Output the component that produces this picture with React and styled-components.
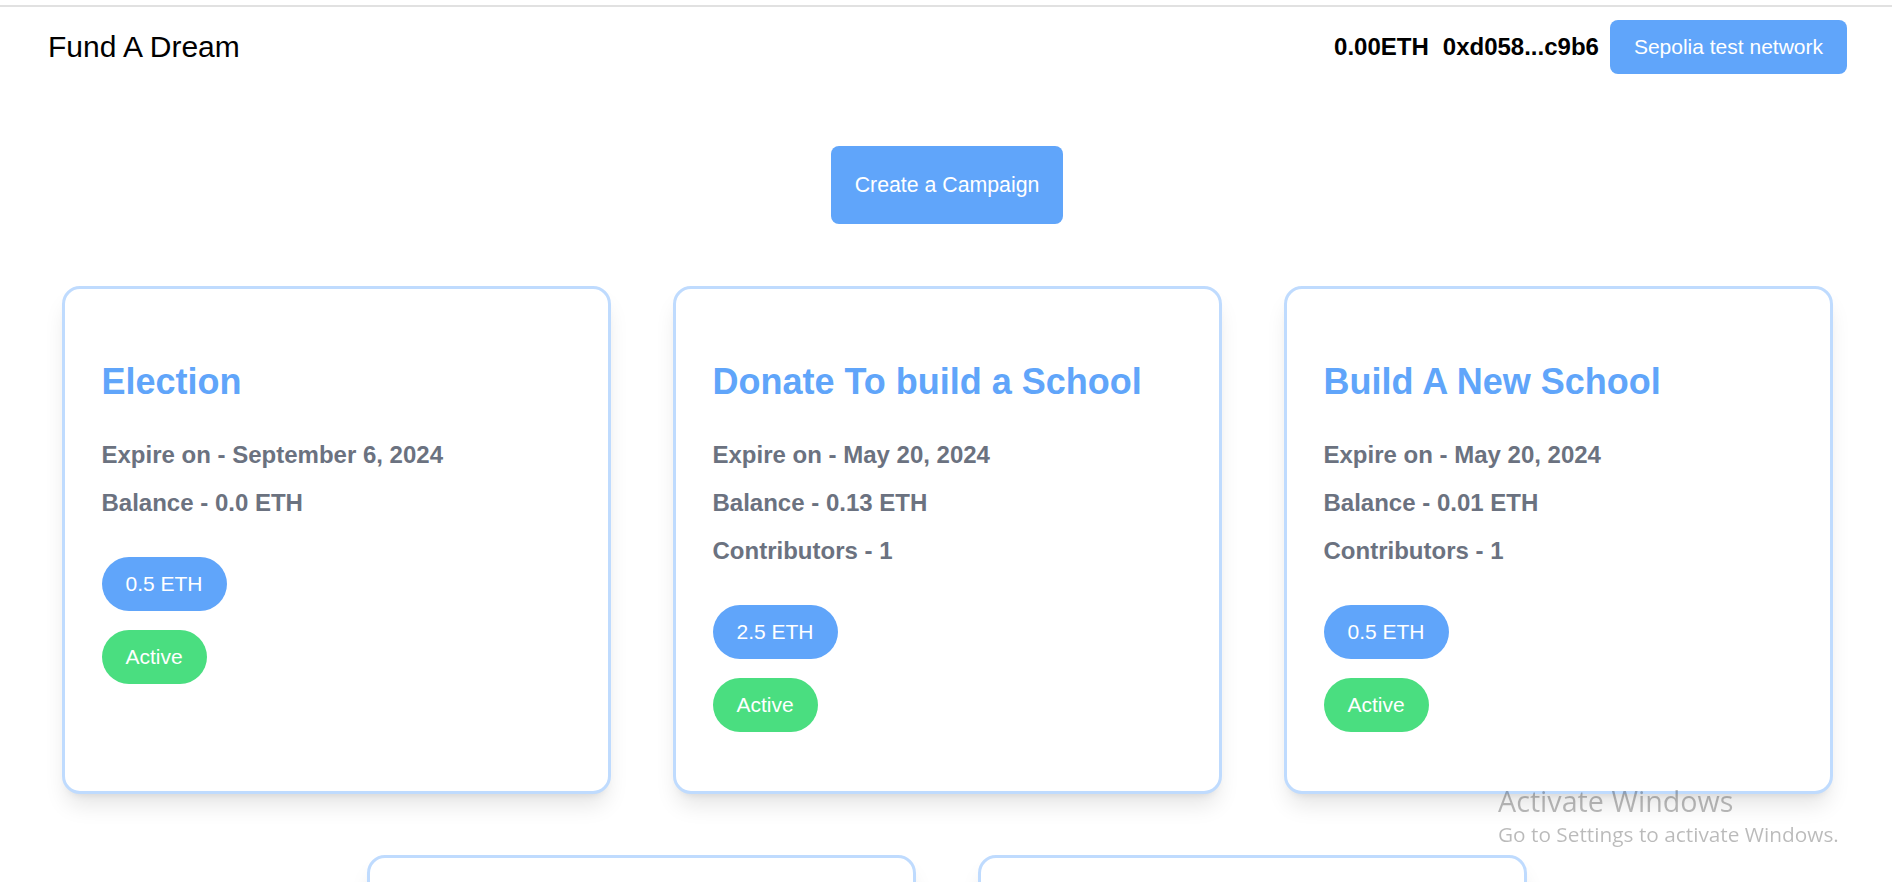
import styled, { createGlobalStyle } from "styled-components";

const GlobalStyle = createGlobalStyle`
  body {
    margin: 0;
    background: #ffffff;
    font-family: "Liberation Sans", Arial, sans-serif;
  }
`;

const campaigns = [
  { title: "Election", expire: "September 6, 2024", balance: "0.0", goal: "0.5", contributors: 0 },
  { title: "Donate To build a School", expire: "May 20, 2024", balance: "0.13", goal: "2.5", contributors: 1 },
  { title: "Build A New School", expire: "May 20, 2024", balance: "0.01", goal: "0.5", contributors: 1 },
  { title: "Clean Water Project", expire: "June 12, 2024", balance: "0.0", goal: "1.0", contributors: 0 },
  { title: "Community Library", expire: "July 1, 2024", balance: "0.0", goal: "0.8", contributors: 0 },
];

const App = () => {
  return (
    <>
      <GlobalStyle />
      <TopRule />
      <Header>
        <Brand>Fund A Dream</Brand>
        <Account>
          <AccountText>0.00ETH</AccountText>
          <AccountText>0xd058...c9b6</AccountText>
          <NetworkButton>Sepolia test network</NetworkButton>
        </Account>
      </Header>

      <Main>
        <CreateButton>Create a Campaign</CreateButton>

        <CardGrid>
          {campaigns.map((c) => (
            <Card key={c.title}>
              <CardTitle>{c.title}</CardTitle>
              <Info>Expire on - {c.expire}</Info>
              <Info>Balance - {c.balance} ETH</Info>
              {c.contributors > 0 && <Info>Contributors - {c.contributors}</Info>}
              <Badges>
                <Pill $tone="blue">{c.goal} ETH</Pill>
                <Pill $tone="green">Active</Pill>
              </Badges>
            </Card>
          ))}
        </CardGrid>
      </Main>

      {/* windows watermark sits over the page */}
      <Watermark>
        <WatermarkTitle>Activate Windows</WatermarkTitle>
        <WatermarkText>Go to Settings to activate Windows.</WatermarkText>
      </Watermark>
    </>
  );
};

export default App;

const TopRule = styled.div`
  height: 5px;
  border-bottom: 2px solid #e1e1e1;
`;

const Header = styled.header`
  display: flex;
  justify-content: space-between;
  align-items: center;
  padding: 13px 45px 12px 48px;
`;

const Brand = styled.div`
  font-size: 30px;
  color: #000;
`;

const Account = styled.div`
  display: flex;
  align-items: center;
  gap: 14px;
`;

const AccountText = styled.span`
  font-size: 24px;
  font-weight: 700;
  color: #000;
`;

const NetworkButton = styled.button`
  font-family: inherit;
  font-size: 21px;
  line-height: 30px;
  color: #fff;
  background: #60a5fa;
  border: none;
  border-radius: 8px;
  padding: 12px 24px;
  margin-left: -3px;
`;

const Main = styled.main`
  display: flex;
  flex-direction: column;
  align-items: center;
  padding-left: 2px;
`;

const CreateButton = styled.button`
  margin-top: 60px;
  font-family: inherit;
  font-size: 21.3px;
  line-height: 30px;
  color: #fff;
  background: #60a5fa;
  border: none;
  border-radius: 8px;
  padding: 24px 24px;
`;

const CardGrid = styled.div`
  margin-top: 62px;
  display: flex;
  flex-wrap: wrap;
  justify-content: center;
  gap: 61px 62px;
  width: 100%;
`;

const Card = styled.div`
  box-sizing: border-box;
  width: 549px;
  padding: 69px 35px 59px 37px;
  background: #fff;
  border: 3px solid #bfdbfe;
  border-radius: 18px;
  box-shadow: 0 15px 22px -4px rgba(0, 0, 0, 0.1), 0 6px 9px -6px rgba(0, 0, 0, 0.1);
`;

const CardTitle = styled.h2`
  margin: 0 0 31px;
  font-size: 36px;
  line-height: 48px;
  font-weight: 700;
  color: #60a5fa;
`;

const Info = styled.p`
  margin: 0 0 12px;
  font-size: 24px;
  line-height: 36px;
  font-weight: 700;
  color: #6b7280;
`;

const Badges = styled.div`
  margin-top: 36px;
  display: flex;
  flex-direction: column;
  align-items: flex-start;
  gap: 19px;
`;

const Pill = styled.span`
  display: inline-block;
  font-size: 21px;
  line-height: 30px;
  padding: 12px 24px;
  border-radius: 999px;
  color: #fff;
  background: ${(p) => (p.$tone === "green" ? "#4ade80" : "#60a5fa")};
`;

const Watermark = styled.div`
  position: fixed;
  left: 1498px;
  top: 783px;
  color: rgba(0, 0, 0, 0.27);
  font-family: "Open Sans", "Noto Sans", sans-serif;
  pointer-events: none;
`;

const WatermarkTitle = styled.div`
  font-size: 28.7px;
  line-height: 36px;
`;

const WatermarkText = styled.div`
  font-size: 20.8px;
  line-height: 30px;
`;
